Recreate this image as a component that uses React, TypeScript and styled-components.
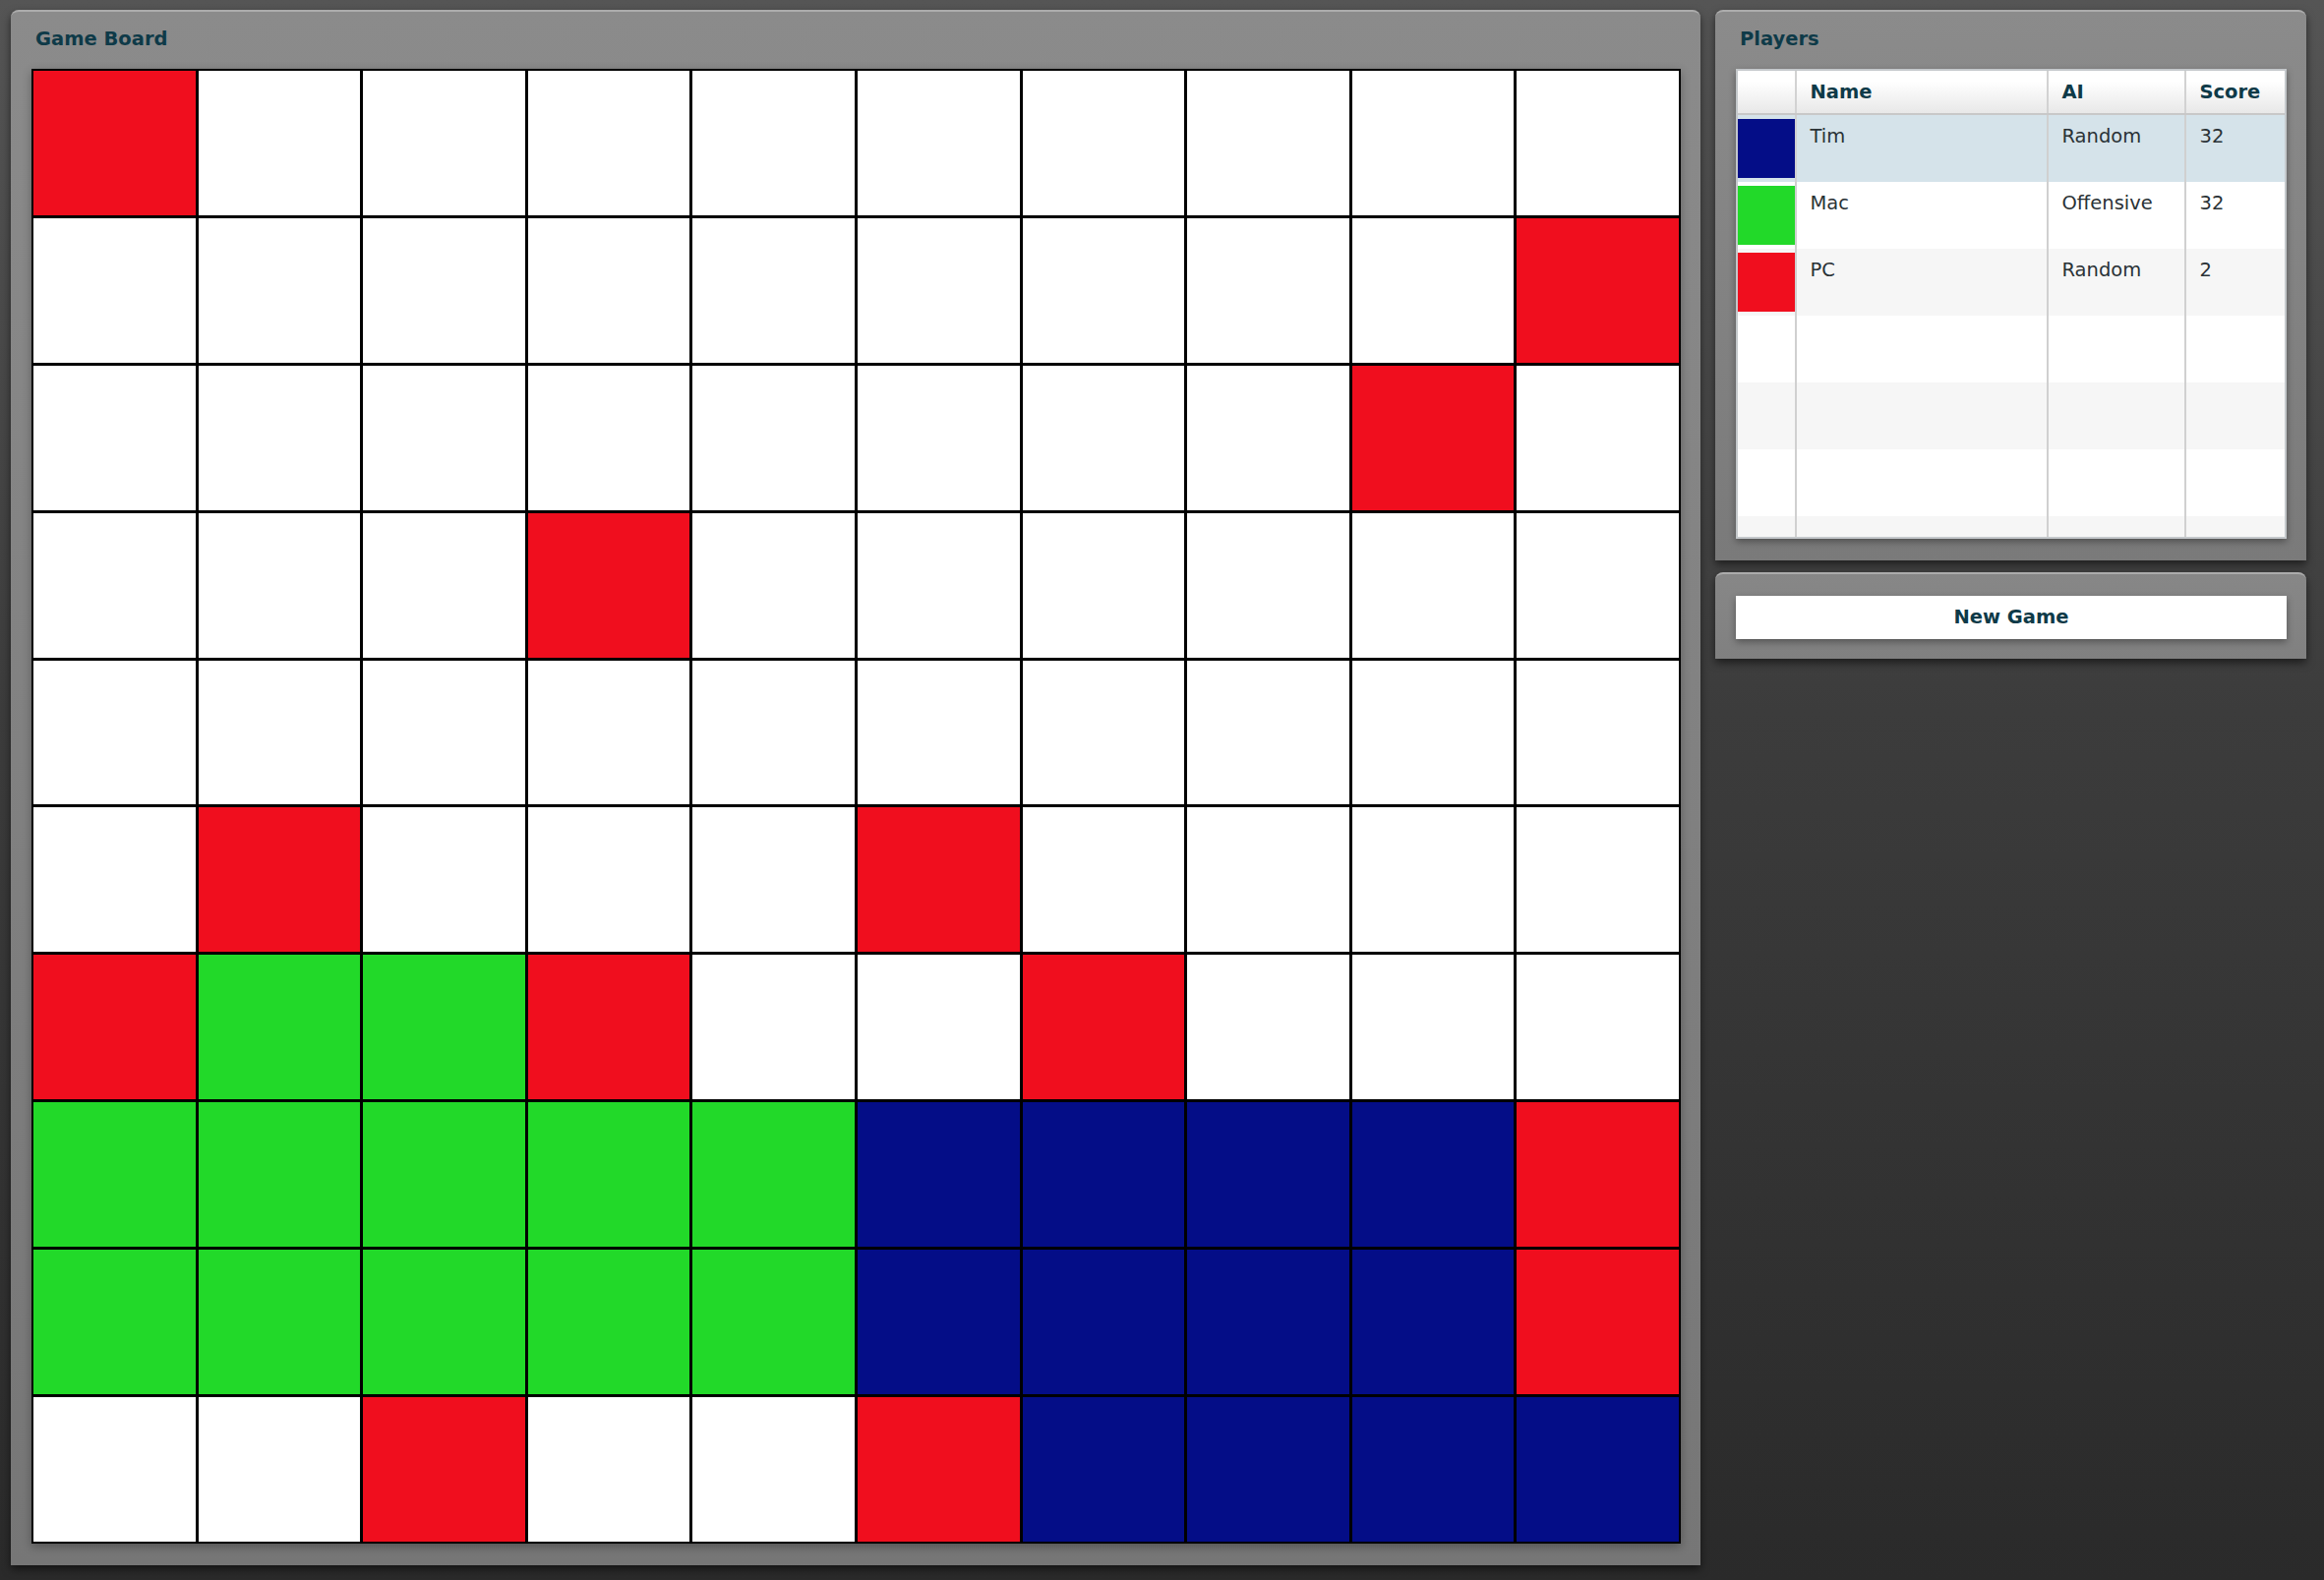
import { createGlobalStyle, styled } from "styled-components";

type Owner = "R" | "G" | "B" | "W";

const COLORS: Record<Owner, string> = {
    R: "#f00e1e",
    G: "#22d929",
    B: "#040d87",
    W: "#ffffff",
};

const BOARD: string[] = [
    "RWWWWWWWWW",
    "WWWWWWWWWR",
    "WWWWWWWWRW",
    "WWWRWWWWWW",
    "WWWWWWWWWW",
    "WRWWWRWWWW",
    "RGGRWWRWWW",
    "GGGGGBBBBR",
    "GGGGGBBBBR",
    "WWRWWRBBBB",
];

interface Player {
    name: string;
    ai: string;
    score: number;
    color: Owner;
}

const players: Player[] = [
    { name: "Tim", ai: "Random", score: 32, color: "B" },
    { name: "Mac", ai: "Offensive", score: 32, color: "G" },
    { name: "PC", ai: "Random", score: 2, color: "R" },
];

const EMPTY_ROWS = 4;

function App() {
    return (
        <>
            <GlobalStyle />
            <Page>
                <BoardPanel>
                    <PanelTitle>Game Board</PanelTitle>
                    <Board>
                        {BOARD.map((row, r) =>
                            row.split("").map((c, i) => (
                                <Cell key={`${r}-${i}`} $color={COLORS[c as Owner]} />
                            ))
                        )}
                    </Board>
                </BoardPanel>

                <SideColumn>
                    {/* players list */}
                    <PlayersPanel>
                        <PanelTitle>Players</PanelTitle>
                        <Table>
                            <HeaderRow>
                                <HeadCell />
                                <HeadCell>Name</HeadCell>
                                <HeadCell>AI</HeadCell>
                                <HeadCell>Score</HeadCell>
                            </HeaderRow>
                            <TableBody>
                                {players.map((p, i) => (
                                    <Row key={p.name} $bg={i === 0 ? "#d5e3ea" : i % 2 ? "#ffffff" : "#f6f6f6"}>
                                        <SwatchCell>
                                            <Swatch $color={COLORS[p.color]} />
                                        </SwatchCell>
                                        <BodyCell>{p.name}</BodyCell>
                                        <BodyCell>{p.ai}</BodyCell>
                                        <BodyCell>{p.score}</BodyCell>
                                    </Row>
                                ))}
                                {Array.from({ length: EMPTY_ROWS }).map((_, i) => (
                                    <Row key={`empty-${i}`} $bg={(players.length + i) % 2 ? "#ffffff" : "#f6f6f6"}>
                                        <SwatchCell />
                                        <BodyCell />
                                        <BodyCell />
                                        <BodyCell />
                                    </Row>
                                ))}
                            </TableBody>
                        </Table>
                    </PlayersPanel>

                    {/* actions */}
                    <ActionPanel>
                        <NewGameButton>New Game</NewGameButton>
                    </ActionPanel>
                </SideColumn>
            </Page>
        </>
    );
}

const GlobalStyle = createGlobalStyle`
    html, body {
        margin: 0;
        padding: 0;
        height: 100%;
    }
    body {
        background: linear-gradient(to bottom, #555555 0%, #3c3c3c 45%, #2a2a2a 100%);
        font-family: "DejaVu Sans", Verdana, sans-serif;
        overflow: hidden;
    }
    #root {
        min-height: 100%;
    }
    * {
        box-sizing: border-box;
    }
`;

const Page = styled.div`
    display: flex;
    align-items: flex-start;
    gap: 15px;
    padding: 10px 18px 0 11px;
`;

const Panel = styled.section`
    border-top: 2px solid #acacac;
    border-radius: 8px 8px 0 0;
    background: linear-gradient(to bottom, #8b8b8b, #7a7a7a);
    box-shadow: 0 4px 9px rgba(0, 0, 0, 0.55);
`;

const BoardPanel = styled(Panel)`
    width: 1718px;
    padding: 0 20px 22px 21px;
    background: linear-gradient(to bottom, #8b8b8b, #767676);
`;

const PanelTitle = styled.h2`
    margin: 0;
    height: 58px;
    padding: 16px 0 0 4px;
    font-size: 19.5px;
    line-height: 23px;
    font-weight: bold;
    color: #0e3a48;
`;

const Board = styled.div`
    display: grid;
    grid-template-columns: repeat(10, 1fr);
    grid-template-rows: repeat(10, 1fr);
    gap: 3px;
    width: 1677px;
    height: 1500px;
    padding: 2px;
    background: #000;
    box-shadow: 0 3px 9px rgba(0, 0, 0, 0.3);
`;

interface ColorProps {
    $color: string;
}

const Cell = styled.div<ColorProps>`
    background: ${(props) => props.$color};
`;

const SideColumn = styled.div`
    display: flex;
    flex-direction: column;
    gap: 12px;
    width: 601px;
`;

const PlayersPanel = styled(Panel)`
    padding: 0 20px 21.5px 21px;
`;

const Table = styled.div`
    display: flex;
    flex-direction: column;
    height: 478px;
    border: 2px solid #c4c8cb;
    background: #fff;
    box-shadow: 0 3px 7px rgba(0, 0, 0, 0.35);
    overflow: hidden;
`;

const columns = "59.5px 256px 140px 1fr";

const HeaderRow = styled.div`
    display: grid;
    grid-template-columns: ${columns};
    height: 45px;
    flex: none;
    border-bottom: 2px solid #c8c8c8;
    background: linear-gradient(to bottom, #ffffff 25%, #e8e8e8 100%);
`;

const HeadCell = styled.div`
    display: flex;
    align-items: center;
    padding: 0 14px;
    font-size: 19.5px;
    font-weight: bold;
    color: #0e3a48;
    border-right: 2px solid #d2d2d2;

    &:last-child {
        border-right: 0;
    }
`;

const TableBody = styled.div`
    flex: 1;
    overflow: hidden;
`;

interface RowProps {
    $bg: string;
}

const Row = styled.div<RowProps>`
    display: grid;
    grid-template-columns: ${columns};
    height: 68px;
    background: ${(props) => props.$bg};
`;

const BodyCell = styled.div`
    padding: 10px 14px 0;
    font-size: 19.5px;
    color: #2a3236;
    border-right: 2px solid #d0d0d0;

    &:last-child {
        border-right: 0;
    }
`;

const SwatchCell = styled.div`
    padding: 4px 0;
    border-right: 2px solid #d0d0d0;
`;

const Swatch = styled.div<ColorProps>`
    height: 60px;
    background: ${(props) => props.$color};
`;

const ActionPanel = styled(Panel)`
    padding: 22px 20px 20px 21px;
    background: linear-gradient(to bottom, #878787, #808080);
`;

const NewGameButton = styled.button`
    display: block;
    width: 100%;
    height: 44px;
    border: 0;
    background: #fff;
    font-family: "DejaVu Sans", Verdana, sans-serif;
    font-size: 19.5px;
    font-weight: bold;
    color: #0e3a48;
    box-shadow: 0 3px 7px rgba(0, 0, 0, 0.35);
    cursor: pointer;
`;

export default App;
